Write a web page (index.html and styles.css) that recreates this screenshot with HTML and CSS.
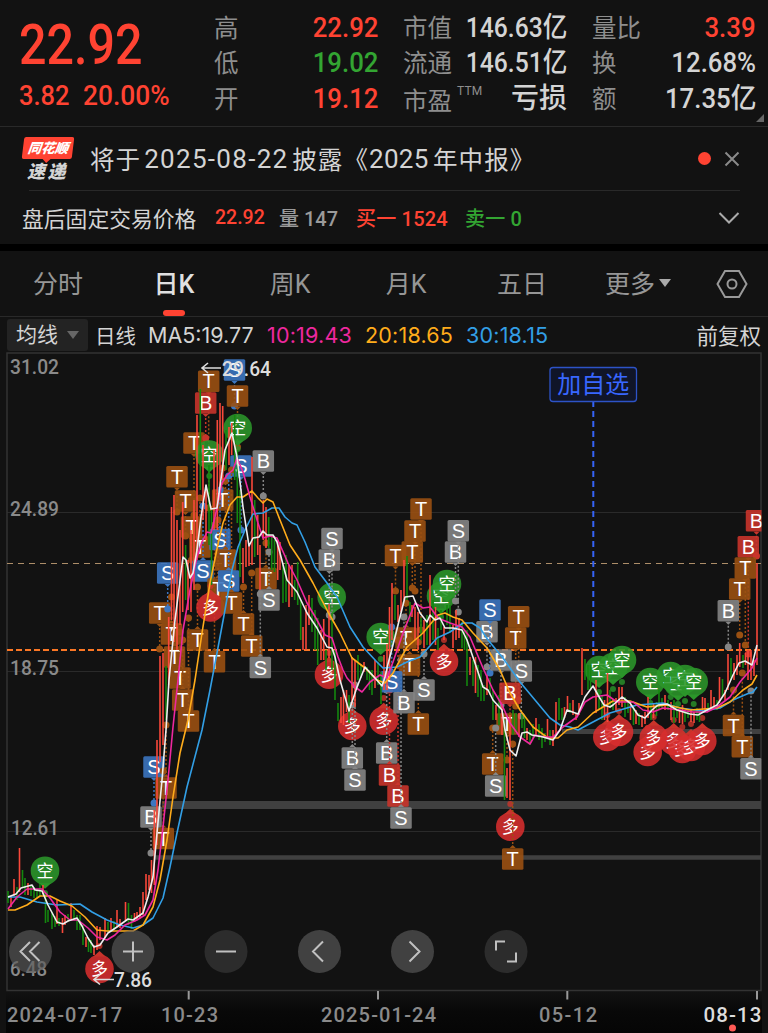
FILE: index.html
```html
<!DOCTYPE html>
<html lang="zh-CN">
<head>
  <meta charset="UTF-8">
  <title>日K</title>
  <link rel="stylesheet" href="styles.css">
</head>
<body>
  <header class="quote">
    <div class="price">
      <div class="last"><span class="num">22.92</span></div>
      <div class="change"><span class="num">3.82</span><span class="num">20.00%</span></div>
    </div>
    <dl class="col col-a">
      <div><dt>高</dt><dd class="up"><span class="num">22.92</span></dd></div>
      <div><dt>低</dt><dd class="down"><span class="num">19.02</span></dd></div>
      <div><dt>开</dt><dd class="up"><span class="num">19.12</span></dd></div>
    </dl>
    <dl class="col col-b">
      <div><dt>市值</dt><dd><span class="num">146.63<b>亿</b></span></dd></div>
      <div><dt>流通</dt><dd><span class="num">146.51<b>亿</b></span></dd></div>
      <div><dt class="low">市盈<sup>TTM</sup></dt><dd><b>亏损</b></dd></div>
    </dl>
    <dl class="col col-c">
      <div><dt>量比</dt><dd class="up"><span class="num">3.39</span></dd></div>
      <div><dt>换</dt><dd><span class="num">12.68%</span></dd></div>
      <div><dt>额</dt><dd><span class="num">17.35<b>亿</b></span></dd></div>
    </dl>
    <i class="corner"></i>
  </header>

  <section class="news">
    <div class="logo"><span class="logo-top">同花顺</span><span class="logo-bottom">速递</span></div>
    <p><span>将于</span><span class="date">2025-08-22</span><span>披露《</span><span class="year">2025</span><span>年中报》</span></p>
    <i class="dot"></i>
    <svg class="close" width="16" height="16" viewBox="0 0 16 16"><path d="M1.5 1.5l13 13M14.5 1.5l-13 13"/></svg>
  </section>

  <section class="after">
    <span class="after-title">盘后固定交易价格</span>
    <span class="up n1">22.92</span>
    <span class="muted n2">量 147</span>
    <span class="up n3">买一 1524</span>
    <span class="down n4">卖一 0</span>
    <svg class="chevron" width="22" height="14" viewBox="0 0 22 14"><path d="M1.5 2l9.5 9.5L20.500 2"/></svg>
  </section>

  <nav class="tabs">
    <a>分时</a>
    <a class="active">日K</a>
    <a>周K</a>
    <a>月K</a>
    <a>五日</a>
    <a class="more">更多<i></i></a>
    <svg class="gear" width="32" height="30" viewBox="0 0 32 30"><path d="M9 2h14l7.500 13-7.500 13H9L1.500 15z"/><circle cx="16" cy="15" r="4.500"/></svg>
  </nav>

  <section class="legend">
    <button>均线<i></i></button>
    <span class="period">日线</span>
    <span class="ma ma5">MA5:19.77</span>
    <span class="ma ma10">10:19.43</span>
    <span class="ma ma20">20:18.65</span>
    <span class="ma ma30">30:18.15</span>
    <span class="adjust">前复权</span>
  </section>

  <svg class="chart" width="768" height="681" viewBox="0 352 768 681">
    <defs>
      <clipPath id="plot"><rect x="7" y="353" width="754.500" height="638"/></clipPath>
      <linearGradient id="fade" x1="0" y1="0" x2="0" y2="1">
        <stop offset="0" stop-color="#121212"/>
        <stop offset=".5" stop-color="#080808"/>
        <stop offset="1" stop-color="#050505"/>
      </linearGradient>
    </defs>
    <rect x="6" y="991" width="756" height="42" fill="url(#fade)"/>
    <path class="grid" d="M7 512.500H761M7 671.500H761M7 831.500H761"/>
    <rect class="frame" x="7" y="353" width="754" height="637.500"/>
    <path class="gap" stroke-width="8" d="M162 805H761"/>
    <path class="gap" stroke-width="4.500" d="M155 857.500H761"/>
    <path class="gap" stroke-width="5" d="M562 731.500H761"/>
    <path class="line-high" d="M7 563.500H761"/>
    <path class="line-price" d="M7 650H761"/>
    <path class="line-add" d="M593.300 401V655"/>
    <g clip-path="url(#plot)">
      <g id="markers"></g>
      <g id="candles"></g>
      <g id="averages"></g>
    </g>

    <rect class="add-box" x="550" y="367.500" width="86.500" height="34" rx="3"/>
    <text class="add-text" x="593.300" y="393" text-anchor="middle">加自选</text>

    <g class="scale">
      <text x="10" y="374" textLength="49" lengthAdjust="spacingAndGlyphs">31.02</text>
      <text x="10" y="515.500" textLength="49" lengthAdjust="spacingAndGlyphs">24.89</text>
      <text x="10" y="675" textLength="49" lengthAdjust="spacingAndGlyphs">18.75</text>
      <text x="11" y="834.500" textLength="48" lengthAdjust="spacingAndGlyphs">12.61</text>
      <text x="10" y="976" textLength="37" lengthAdjust="spacingAndGlyphs">6.48</text>
    </g>
    <path class="arrow" d="M221 368H202M208 363l-6 5 6 5M114 979.500H94M100 974.500l-6 5 6 5"/>
    <text class="extreme" x="222" y="375.500" textLength="49" lengthAdjust="spacingAndGlyphs">29.64</text>
    <text class="extreme" x="114" y="987" textLength="38" lengthAdjust="spacingAndGlyphs">7.86</text>

    <g class="tools">
      <circle cx="30.500" cy="951.500" r="21.500"/>
      <circle cx="133" cy="951.500" r="21.500"/>
      <circle class="off" cx="226" cy="951.500" r="21.500"/>
      <circle cx="319.500" cy="951.500" r="21.500"/>
      <circle cx="412.500" cy="951.500" r="21.500"/>
      <circle class="off" cx="506" cy="951.500" r="21.500"/>
      <path d="M30 942l-9.500 9.500 9.500 9.500M39.500 942l-9.500 9.500 9.500 9.500M123 951.500h20M133 941.500v20M216 951.500h20M323 941.500l-10 10 10 10M409.500 941.500l10 10-10 10M496 950.500v-9h9M516 952.500v9h-9"/>
    </g>

    <path class="ticks" d="M188.700 991v8.500M378 991v8.500M567.300 991v8.500M757 991v8.500"/>
    <g class="dates">
      <text x="7" y="1022" textLength="115">2024-07-17</text>
      <text x="161" y="1022" textLength="57">10-23</text>
      <text x="321" y="1022" textLength="115">2025-01-24</text>
      <text x="539" y="1022" textLength="58">05-12</text>
      <text class="today" x="703.500" y="1022" textLength="58">08-13</text>
    </g>
    <circle cx="732.500" cy="1028" r="3.500" fill="#ff5a55"/>
  </svg>
  <script src="chart.js"></script>
</body>
</html>
```
FILE: styles.css
```css
* {
  box-sizing: border-box;
}
body {
  margin: 0;
  width: 768px;
  height: 1033px;
  overflow: hidden;
  background: #121212;
  color: #d4d4d4;
  font-family: Roboto, "Noto Sans CJK SC", sans-serif;
}
dl, dd, p {
  margin: 0;
}
.up {
  color: #ff4332;
}
.down {
  color: #33a532;
}
.muted {
  color: #9a9a9a;
}
.num {
  display: inline-block;
  font-weight: 500;
  white-space: nowrap;
  transform: scaleX(0.92);
  transform-origin: right center;
}

/* quote header */
.quote {
  position: relative;
  display: grid;
  grid-template-columns: 214px 164px 25px 164px 25px 164px;
  height: 127px;
  border-bottom: 1px solid #292929;
}
.price {
  padding: 10px 0 0 19px;
  color: #ff4332;
}
.price .num {
  transform-origin: left center;
}
.last {
  height: 68px;
  line-height: 70px;
  font-size: 55px;
}
.last .num {
  transform: scaleX(0.88);
}
.change {
  display: flex;
  gap: 14px;
  height: 36px;
  line-height: 36px;
  font-size: 28px;
}
.change .num {
  transform: scaleX(0.94);
}
.change .num:first-child {
  width: 50px;
  transform: scaleX(0.91);
}
.col {
  padding-top: 9.5px;
}
.col-a {
  grid-column: 2;
}
.col-b {
  grid-column: 4;
}
.col-b .num {
  transform: scaleX(0.88);
}
.col-c {
  grid-column: 6;
}
.col div {
  display: flex;
  justify-content: space-between;
  height: 35.500px;
  line-height: 36px;
}
.col dt {
  padding-top: 1px;
  color: #8e8e8e;
  font-size: 24.5px;
  white-space: nowrap;
}
.col dd {
  font-size: 28px;
  white-space: nowrap;
}
.col b {
  font-size: 28px;
  font-weight: 500;
}
.col sup {
  display: inline-block;
  margin-left: 5px;
  font-size: 12px;
  line-height: 12px;
  letter-spacing: 0.2px;
  vertical-align: 15px;
}
.col .low {
  padding-top: 3px;
}
.corner {
  position: absolute;
  right: 4px;
  bottom: 4px;
  border-left: 8px solid transparent;
  border-bottom: 8px solid #666;
}

/* news line */
.news {
  display: flex;
  align-items: center;
  height: 63px;
  margin: 0 28px 0 22px;
}
.logo {
  position: relative;
  width: 53px;
  height: 44px;
  font-style: italic;
  font-weight: 900;
}
.logo-top {
  display: block;
  width: 50px;
  height: 22px;
  margin-left: 1px;
  background: #ff4332;
  border-radius: 2px;
  transform: skewX(-7deg);
  color: #fff;
  font-size: 13.5px;
  line-height: 22px;
  text-align: center;
}
.logo-top::after {
  content: "";
  position: absolute;
  left: 21px;
  top: 22px;
  border: 4px solid transparent;
  border-top-color: #ff4332;
  border-bottom: 0;
}
.logo-bottom {
  display: block;
  padding-left: 5px;
  font-size: 18px;
  line-height: 25px;
  letter-spacing: 2.5px;
}
.news p {
  display: flex;
  flex: 1;
  margin-left: 15px;
  font-size: 24.5px;
  letter-spacing: 1.1px;
  white-space: nowrap;
}
.news .date {
  width: 148px;
  margin-left: 3px;
  font-size: 26px;
  line-height: 36px;
  letter-spacing: 1.3px;
}
.news .year {
  width: 64px;
  font-size: 26px;
  line-height: 36px;
  letter-spacing: 0.3px;
}
.dot {
  width: 13px;
  height: 13px;
  margin-right: 13px;
  border-radius: 50%;
  background: #ff4332;
}
.close, .chevron, .gear {
  fill: none;
  stroke: #8a8a8a;
  stroke-width: 2;
}

/* after-hours line */
.after {
  display: flex;
  align-items: center;
  height: 54px;
  margin: 0 28px 0 29px;
  border-top: 1px solid #292929;
  font-size: 20px;
  font-weight: 500;
  white-space: nowrap;
}
.after-title {
  width: 193px;
  margin-left: -7px;
  font-size: 21.8px;
  font-weight: 400;
}
.n1 {
  width: 64px;
  font-size: 19.5px;
}
.n2 {
  width: 77px;
}
.n3 {
  width: 109px;
  letter-spacing: 0.2px;
}
.n4 {
  letter-spacing: 0.2px;
}
.chevron {
  margin-left: auto;
  stroke: #aaa;
}

/* period tabs */
.tabs {
  display: flex;
  align-items: center;
  height: 73px;
  border-top: 7px solid #000;
  border-bottom: 1px solid #292929;
  color: #969696;
  font-size: 25px;
}
.tabs a {
  position: relative;
  width: 116px;
  margin-top: -3px;
  text-align: center;
}
.tabs .active {
  color: #e0e0e0;
  font-weight: 500;
}
.tabs .active::after {
  content: "";
  position: absolute;
  left: 47px;
  bottom: -15.5px;
  width: 22px;
  height: 6px;
  border-radius: 3px;
  background: #ff4332;
}
.tabs i, .legend i {
  display: inline-block;
  margin-left: 4px;
  border: 6px solid transparent;
  border-top: 8px solid #aaa;
  border-bottom: 0;
  vertical-align: 6px;
}
.gear {
  margin-left: 20px;
  stroke: #999;
}

/* moving average legend */
.legend {
  display: flex;
  align-items: center;
  height: 35px;
  padding: 0 7px;
  font-size: 23px;
  white-space: nowrap;
}
.legend button {
  width: 81px;
  height: 32px;
  padding: 0;
  border: 0;
  border-radius: 3px;
  background: #232323;
  color: #d4d4d4;
  font: inherit;
  font-size: 21px;
  line-height: 32px;
}
.legend i {
  margin-left: 9px;
  border-top-color: #666;
  vertical-align: 3px;
}
.period {
  width: 53px;
  margin-left: 7px;
  font-size: 20.5px;
}
.ma {
  width: 101px;
  font-family: Inter, sans-serif;
  font-size: 21.5px;
  letter-spacing: 0.2px;
}
.ma5 {
  width: 119px;
  letter-spacing: 0;
}
.ma10 {
  width: 98px;
  color: #ee289f;
}
.ma20 {
  color: #ffac1b;
}
.ma30 {
  color: #329fe6;
}
.adjust {
  margin-left: auto;
  font-size: 21.5px;
}

/* chart */
.chart {
  display: block;
}
.chart path {
  fill: none;
}
.grid {
  stroke: #2a2a2a;
}
.frame {
  fill: none;
  stroke: #333;
  stroke-width: 1.5;
}
.gap {
  stroke: #404040;
}
.line-high {
  stroke: #ad8e69;
  stroke-width: 1.2;
  stroke-dasharray: 6 5;
}
.line-price {
  stroke: #fb7725;
  stroke-width: 1.8;
  stroke-dasharray: 6 3;
}
.line-add {
  stroke: #3563f5;
  stroke-width: 2;
  stroke-dasharray: 6 4;
}
.add-box {
  fill: #101528;
  stroke: #2d53c7;
  stroke-width: 1.3;
}
.add-text {
  fill: #3867ff;
  font-size: 24px;
}
.scale, .dates {
  fill: #8a8a8a;
  font-size: 20.5px;
  font-weight: 500;
}
.dates {
  font-size: 20px;
}
.today, .extreme {
  fill: #ddd;
  font-size: 20.5px;
  font-weight: 500;
}
.arrow {
  stroke: #ddd;
  stroke-width: 1.6;
}
.tools circle {
  fill: rgba(90, 90, 90, 0.65);
}
.tools .off {
  fill: rgba(62, 62, 62, 0.6);
}
.tools path {
  stroke: #c0c0c0;
  stroke-width: 2;
}
.ticks {
  stroke: #999;
  stroke-width: 2;
}
.candle {
  stroke-width: 1.6;
}
.rise {
  stroke: #f9483a;
}
.fall {
  stroke: #14870f;
}
.average {
  fill: none;
  stroke-width: 1.6;
  stroke-linejoin: round;
}
.stem {
  stroke-width: 1.5;
  stroke-dasharray: 2 2;
}
.mark {
  fill: #fff;
  font-family: "Liberation Sans", sans-serif;
  font-size: 20px;
  text-anchor: middle;
}
.pin {
  fill: #fff;
  font-size: 17px;
  text-anchor: middle;
}
```
FILE: chart.js
```javascript
// x, top, bottom
const rise = `11 896 907,14 879 896,19.500 848 892,28 883 895,43 885 894,57 900 924,62.500 918 933,65 915 925,71 903 919,86 937 947,94 945 955,97 926 950,100 927 940,105 918 938,111 918 930,117 910 927,120 919 928,125.500 902 920,134.500 913 922,137 912 920,140 907 918,143 892 915,146 874 900,149 875 890,151.500 860 893,154.300 810 885,157 740 845,160 656 762,163 653 745,168.700 617 685,171.500 507 620,174 495 642,177 520 650,180 530 625,182.700 502 612,188 560 610,191 530 612,194 500 590,197 415 560,203 445 520,206 485 540,214 450 530,217.300 420 530,220 403 500,222.700 406 480,229 427 465,231.700 423 455,243 548 583,246 540 567,249 545 566,252 457 565,257.700 515 555,260 545 590,263.300 500 540,266 507 548,277.700 540 580,280 542 570,289 565 607,292 565 597,303 627 650,306 605 650,309 595 625,321 630 660,323.700 619 660,329 604 658,341 697 723,343.500 690 725,346.500 690 712,352 657 705,355 660 707,364 662 672,375 660 688,384 655 690,387 644 690,389.500 607 680,392 583 640,398 605 622,401 590 612,404 560 600,412 605 617,415 607 640,418 612 650,424 620 648,430 575 645,435.500 607 645,444 627 640,453 625 648,456 610 640,459 618 638,470 657 675,475.500 657 693,487 675 695,496 705 720,502 705 735,507 768 798,510 715 800,519 713 737,527 728 740,536 718 735,547.500 719 737,553 730 746,556 702 735,564.500 707 718,567.500 696 712,573 700 715,576 713 720,579 703 715,582 648 695,596 680 713,604.500 700 720,607.500 673 722,616 698 712,619 687 705,622 687 707,630.500 705 720,636 710 724,642 715 727,645 712 724,648 697 718,653.500 704 718,665 695 710,671 702 720,679.500 710 723,682.500 705 724,691 710 722,694 712 723,702.500 697 712,705 698 710,711 690 708,714 697 706,719.500 677 703,725 690 700,728 654 690,734 663 680,737 655 675,739.700 643 667,745.500 653 665,748 650 680,751 650 680,754 660 676,757 563 665`;
const fall = `8 891 903,17 887 900,22.500 870 888,25 878 895,31 886 896,34 887 898,37 889 898,40 884 896,45.500 895 923,48 910 922,52 912 929,55 916 927,59 918 926,68 914 922,74 910 921,77 915 930,80 915 930,83 925 945,88.500 938 952,91 940 953,108 922 932,114 921 930,128.500 903 925,131.500 915 929,166 666 720,185.600 545 600,200.300 389 490,209 465 545,211.500 510 585,226 430 470,234.700 415 480,237.300 450 523,240 490 577,254.700 500 557,268.700 517 548,271.700 535 570,274.500 540 572,283 565 603,286 555 602,294.700 580 600,297.700 562 605,300.700 600 640,312 598 632,315 610 650,317.700 618 665,326 650 670,332 613 670,335 650 700,338 703 721,349 695 723,358 655 680,361 665 678,367 667 680,369.500 670 690,372 670 695,378 662 685,381 672 704,395 595 620,407 556 600,410 602 622,421 618 640,427 615 645,433 600 640,438 628 650,441 610 630,447 605 625,450 605 632,462 622 648,464.500 630 650,467 630 686,473 660 686,478 665 697,481 670 701,484 685 701,490 678 695,493 690 720,499 695 725,504.500 720 800,513 710 735,516 713 733,522 714 728,524.500 715 738,530 730 745,533 724 738,539 724 740,542 728 748,545 733 742,550 730 745,559 698 720,562 708 720,570 703 713,585 659 680,588 665 690,590.500 665 690,599 692 710,602 695 720,610 690 708,613 700 710,625 697 717,628 700 713,633.500 705 725,639 713 725,651 705 720,656.500 702 716,659 690 710,662 698 708,668 700 710,674 700 723,677 707 718,685 710 722,688 710 718,697 708 720,699.500 710 722,708 703 710,717 700 710,722.500 679 697,731 658 680,743 655 668`;

const averages = {
  "#329fe6": "8,897 20,897 37,902 57,905 80,904 92,912 107,920 120,925 133,928 143,925 153,918 163,898 170,867 177,833 187,787 202,730 210,690 217,653 225,610 232,570 238,547 245,530 253,514 263,513 272,508 279,508 285,517 292,523 297,525 305,542 315,567 327,583 337,597 350,627 363,647 376,661 383,668 397,667 407,662 420,657 437,638 450,632 463,623 472,623 480,628 488,640 503,658 520,682 535,700 550,718 560,725 570,727 578,730 593,722 610,713 637,705 663,703 680,708 703,711 720,708 733,700 747,694 753,692 757,687",
  "#ffac1b": "8,910 15,910 27,905 40,896 50,896 60,901 72,906 85,917 97,930 107,931 133,931 143,925 153,907 160,880 167,840 173,797 180,753 188,720 195,680 202,633 210,583 218,544 223,523 230,505 237,497 243,497 252,491 258,498 263,503 267,499 273,502 280,520 290,545 300,560 313,583 328,612 340,633 352,658 365,668 377,680 385,683 393,673 407,647 423,633 438,615 445,613 453,617 462,620 473,633 487,648 500,670 510,693 520,710 533,727 548,738 558,738 567,730 578,727 593,713 613,701 630,701 647,707 667,705 690,710 717,708 730,702 743,690 752,684 757,675",
  "#ee289f": "8,909 17,897 27,889 42,889 50,898 60,912 70,920 78,920 88,928 97,937 107,940 115,935 125,925 137,920 145,915 153,900 158,870 163,827 168,780 173,727 178,680 183,630 190,590 197,557 202,542 207,532 211,533 215,517 222,483 227,475 233,470 237,458 243,472 250,497 258,523 263,538 270,536 277,538 288,563 297,580 307,603 317,620 325,635 332,638 338,657 343,670 347,678 355,687 362,692 370,682 380,675 387,678 393,662 403,633 415,603 423,608 430,607 438,618 450,623 462,627 470,637 483,668 493,690 502,705 510,723 520,737 530,744 535,735 545,737 553,737 563,727 577,717 585,702 593,697 607,695 617,702 633,702 643,710 653,712 663,708 680,710 693,712 707,712 717,707 730,697 740,682 752,668 757,658",
  "#eeeeee": "8,897 16,894 21,888 32,885 35,890 42,891 48,905 57,922 63,924 68,921 77,918 82,926 88,938 94,947 100,945 108,933 117,927 128,919 133,920 143,913 148,897 153,877 157,833 162,780 166,730 169,680 175,620 183,557 186,560 190,578 193,573 197,550 201,517 206,485 211,509 217,508 225,450 232,433 237,457 243,507 249,546 253,538 259,537 263,531 267,535 273,535 277,542 280,553 287,580 297,592 307,613 317,628 327,647 332,648 335,657 340,680 349,711 357,687 365,667 375,678 382,686 385,677 388,664 395,637 405,597 413,596 420,613 427,622 430,615 435,620 440,618 445,628 453,628 462,630 467,640 475,663 483,687 488,690 493,700 502,710 505,730 510,750 516,756 522,733 527,732 532,735 543,737 553,740 560,730 567,710 578,714 585,697 593,686 598,695 604,705 610,707 613,705 622,697 630,703 638,715 645,718 652,710 658,705 667,704 677,710 690,714 698,715 707,710 717,705 725,693 733,675 739,663 745,661 752,665 757,645"
};

// label, colour, x, y of the box, y of the point on the candle
const markers = `B gray 151 817 853,S blue 154 767 803,T brown 163.300 838.500 771,T brown 166 788 725,T brown 159.700 613 649,S blue 167.700 573 609,T brown 171.500 634 597,T brown 174.500 657 633,T brown 180 678 632,T brown 182.700 700 640,T brown 188.500 721 618,T brown 177 476.700 512,T brown 185.500 501 536,T brown 194 443 515,T brown 191.500 527 560,T brown 200 547 498,T brown 208.700 381.300 508,B red 205.700 403 438,S blue 203 571 506,T brown 197.500 640 587,T brown 214.500 661.700 525,S blue 234.500 370 406,T brown 237.500 396 447,空 green 209.300 454.500 476,空 green 237.700 428 449,S blue 241 466 530,B gray 263.300 461 496,T brown 222.700 500 468,S blue 220 539.500 490,T brown 225.500 560 481,T brown 218 589 520,S blue 228.700 581 476,多 red 210.500 607.500 586,T brown 231.500 603 470,T brown 243.500 624 587,T brown 251.700 646 573,S gray 260.300 667.500 594,T brown 266 578.500 543,S gray 269 600 552,空 green 45 870.700 893,多 red 99.500 969 946,空 green 331.700 597 617,B gray 329.300 560 615,S gray 332 538.500 617,多 red 329 674.700 653,多 red 352.300 726 705,B gray 352.300 758 705,S gray 355 780 685,空 green 380.700 637 659,多 red 383.700 720.700 698,B gray 386.700 753 690,B red 389.500 775 690,B red 398 796 640,S gray 401 818 660,T brown 395.500 555.500 591,T brown 421 509 630,T brown 415 531 591,T brown 412.300 552 588,T brown 406 638 603,T brown 409.500 665 640,S blue 391.700 681.700 627,B gray 404 702.700 617,T brown 418.300 724 642,S gray 424 690 654,空 green 441 596 617,空 green 447 584 606,B gray 455.500 552 601,S gray 458.300 530.700 612,多 red 444 661.700 640,B gray 487 631.700 667,S blue 490 610 673,B gray 501 660 705,T brown 515.700 638 706,T brown 518.700 616.700 700,S gray 521.300 671 716,B red 510 693.300 720,T brown 507 724 760,T brown 492.700 764 728,S gray 495.700 786 728,多 red 510.300 826.700 804,T brown 512.700 859 744,空 green 599 670 692,空 green 613 667 689,空 green 622 660 682,空 green 650.300 682 703,空 green 670.700 676 697,空 green 678 683 704,空 green 685 679 701,空 green 693.700 682 704,多 red 607.300 737 715,多 red 619 732 711,多 red 647.700 752 728,多 red 653.700 738 717,多 red 673.700 741 720,多 red 682.300 749 727,多 red 691 747 724,多 red 702.300 741 718,B red 756.500 520.700 556,B red 748.300 546.700 654,T brown 745.300 568 645,T brown 739.700 589 635,B gray 728.300 610.700 647,T brown 733.500 725.500 690,T brown 742.300 746.700 673,S gray 751 768.700 691`;

const colors = { gray: "#858585", blue: "#3c76c0", brown: "#9a5012", red: "#c9342b", green: "#2b962a" };

function drawCandles(list, name) {
  return list.split(",").map(c => {
    const [x, top, bottom] = c.split(" ");
    return `<line class="candle ${name}" x1="${x}" x2="${x}" y1="${top}" y2="${bottom}"/>`;
  }).join("");
}

function drawMarker(item) {
  const parts = item.split(" ");
  const label = parts[0];
  const color = colors[parts[1]];
  const [x, y, end] = parts.slice(2).map(Number);
  const side = end > y ? 1 : -1;
  let out = "";
  if (label === "空" || label === "多") {
    const edge = y + side * 18;
    out += `<circle cx="${x}" cy="${end}" r="3" fill="${color}" opacity=".8"/>`;
    out += `<circle cx="${x}" cy="${y}" r="14.300" fill="${label === "多" ? "#d72e2e" : color}" opacity=".88"/>`;
    out += `<polygon points="${x - 6},${y + side * 12.5} ${x + 6},${y + side * 12.5} ${x},${edge}" fill="${color}"/>`;
    out += `<text class="pin" x="${x}" y="${y + 6}">${label}</text>`;
  } else {
    const edge = y + side * 11;
    out += `<line class="stem" x1="${x}" x2="${x}" y1="${edge}" y2="${end}" stroke="${color}"/>`;
    out += `<circle cx="${x}" cy="${end}" r="3.500" fill="${color}"/>`;
    out += `<rect x="${x - 10.75}" y="${y - 10.75}" width="21.500" height="21.500" rx="1.500" fill="${color}" opacity=".9"/>`;
    out += `<polygon points="${x - 3},${edge} ${x + 3},${edge} ${x},${edge + side * 3}" fill="${color}"/>`;
    out += `<text class="mark" x="${x}" y="${y + 7}">${label}</text>`;
  }
  return out;
}

document.getElementById("markers").innerHTML = markers.split(",").map(drawMarker).join("");
document.getElementById("candles").innerHTML = drawCandles(rise, "rise") + drawCandles(fall, "fall");
document.getElementById("averages").innerHTML = Object.keys(averages)
  .map(c => `<polyline class="average" stroke="${c}" points="${averages[c]}"/>`).join("");
```
